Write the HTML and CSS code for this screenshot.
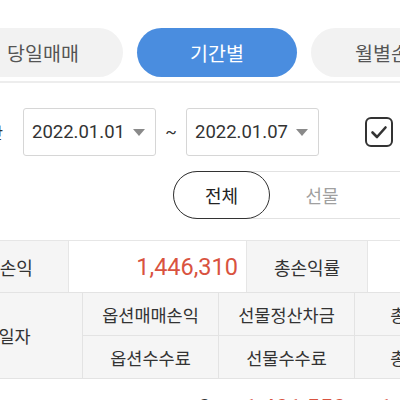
FILE: index.html
```html
<!DOCTYPE html>
<html lang="ko">
<head>
<meta charset="utf-8">
<link rel="stylesheet" href="styles.css">
</head>
<body>
<div class="page">
  <div class="tabs">
    <div class="tab">당일매매</div>
    <div class="tab active">기간별</div>
    <div class="tab">월별손익</div>
  </div>

  <div class="date-row">
    <div class="date-label">기간</div>
    <div class="date-box"><span>2022.01.01</span><i class="caret"></i></div>
    <div class="tilde">~</div>
    <div class="date-box"><span>2022.01.07</span><i class="caret"></i></div>
    <div class="check">
      <svg viewBox="0 0 28 30" width="28" height="30"><rect x="1" y="1" width="26" height="28" rx="5" fill="none" stroke="#333" stroke-width="2"/><path d="M7.5 15.5 L12 20 L20.5 10.5" fill="none" stroke="#333" stroke-width="2.6" stroke-linecap="round" stroke-linejoin="round"/></svg>
    </div>
  </div>

  <div class="seg-row">
    <div class="seg">
      <div class="seg-item selected">전체</div>
      <div class="seg-item">선물</div>
      <div class="seg-item">옵션</div>
    </div>
  </div>

  <div class="summary">
    <div class="s-label">총손익</div>
    <div class="s-value red">1,446,310</div>
    <div class="s-label">총손익률</div>
    <div class="s-value red">1.24%</div>
  </div>

  <div class="grid">
    <div class="h h-date">일자</div>
    <div class="h">옵션매매손익</div>
    <div class="h">선물정산차금</div>
    <div class="h">총손익금</div>
    <div class="h">옵션수수료</div>
    <div class="h">선물수수료</div>
    <div class="h">총수수료</div>
  </div>

  <div class="data-row">
    <div class="d"></div>
    <div class="d">0</div>
    <div class="d red">1,401,550</div>
    <div class="d red">1,401,550</div>
  </div>
</div>
</body>
</html>
```

FILE: styles.css
```css
html, body {
  margin: 0;
  padding: 0;
  background: #fff;
}
body {
  width: 400px;
  height: 400px;
  overflow: hidden;
  font-family: "Roboto", "Noto Sans CJK KR", "Noto Sans", sans-serif;
  color: #333;
}
.page {
  width: 400px;
}
.tabs {
  display: flex;
  gap: 14px;
  margin-left: -37px;
  padding-top: 28px;
  padding-bottom: 4px;
  border-bottom: 2px solid #ededed;
  width: 600px;
}
.tab {
  flex: 0 0 160px;
  height: 49px;
  border-radius: 25px;
  background: #f2f2f2;
  color: #555;
  font-size: 19.5px;
  display: flex;
  align-items: center;
  justify-content: center;
}
.tab.active {
  background: #4a8ddf;
  color: #fff;
}
.date-row {
  display: flex;
  align-items: center;
  margin-top: 25px;
  height: 48px;
}
.date-label {
  flex: 0 0 34px;
  margin-left: -31px;
  text-align: right;
  font-size: 16px;
  color: #333;
}
.date-box {
  flex: 0 0 133px;
  box-sizing: border-box;
  height: 48px;
  margin-left: 20px;
  border: 1px solid #d6d6d6;
  border-radius: 3px;
  display: flex;
  align-items: center;
  justify-content: space-between;
  padding: 0 10px 0 8px;
  font-size: 18.5px;
  color: #333;
}
.date-box + .tilde + .date-box {
  margin-left: 0;
}
.caret {
  width: 0;
  height: 0;
  border-left: 6px solid transparent;
  border-right: 6px solid transparent;
  border-top: 7px solid #8a8a8a;
}
.tilde {
  flex: 0 0 30px;
  text-align: center;
  font-size: 17px;
  color: #333;
}
.check {
  margin-left: 46px;
  width: 28px;
  height: 30px;
  display: flex;
}
.seg-row {
  margin-top: 15px;
  padding-left: 173px;
}
.seg {
  display: flex;
  width: 320px;
  height: 48px;
  box-sizing: border-box;
  border: 1px solid #e2e2e2;
  border-radius: 24px;
}
.seg-item {
  flex: 0 0 104px;
  display: flex;
  align-items: center;
  justify-content: center;
  font-size: 18px;
  color: #a0a0a0;
}
.seg-item.selected {
  flex: 0 0 97px;
  box-sizing: border-box;
  height: 48px;
  margin: -1px 0 0 -1px;
  border: 1.5px solid #333;
  border-radius: 24px;
  color: #222;
}
.summary {
  display: flex;
  margin-top: 21px;
  margin-left: -52px;
  height: 51px;
  border-top: 1px solid #e6e6e6;
  width: 600px;
}
.s-label {
  flex: 0 0 120px;
  background: #f5f5f5;
  display: flex;
  align-items: center;
  justify-content: center;
  font-size: 18px;
  color: #333;
}
.s-value {
  flex: 0 0 179px;
  box-sizing: border-box;
  display: flex;
  align-items: center;
  justify-content: flex-end;
  padding-right: 8px;
  font-size: 23.5px;
  border-left: 1px solid #e6e6e6;
  border-right: 1px solid #e6e6e6;
}
.red {
  color: #d9533f;
}
.grid {
  display: grid;
  grid-template-columns: repeat(4, 135px);
  grid-template-rows: 42px 42px;
  margin-left: -53px;
  width: 540px;
  background: #e3e3e3;
  gap: 1px;
  border-top: 1px solid #e3e3e3;
  border-bottom: 1px solid #e3e3e3;
}
.h {
  background: #f5f5f5;
  display: flex;
  align-items: center;
  justify-content: center;
  font-size: 17.5px;
  color: #333;
}
.h-date {
  grid-row: span 2;
}
.data-row {
  display: grid;
  grid-template-columns: repeat(4, 135px);
  margin-left: -53px;
  width: 540px;
  padding-top: 15px;
}
.d {
  text-align: right;
  padding-right: 6px;
  font-size: 23.5px;
  color: #333;
}
.d.red {
  color: #d9533f;
}
```
